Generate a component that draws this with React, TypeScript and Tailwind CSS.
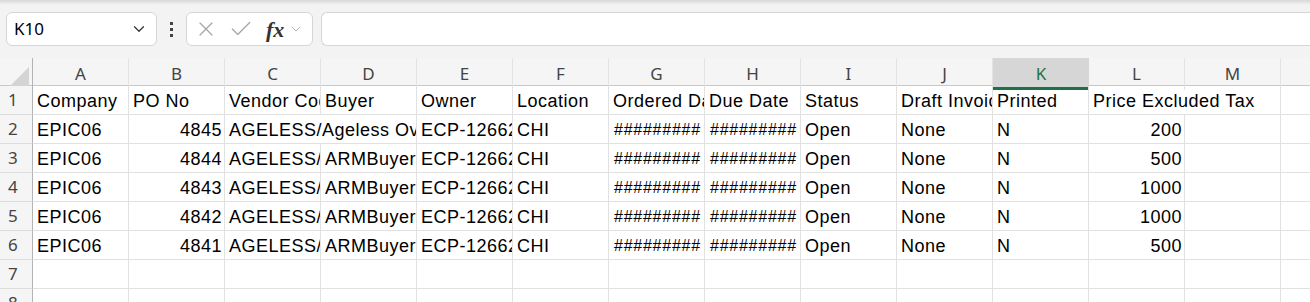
import { ChevronDown, X, Check } from "lucide-react";

const COLS = ["A", "B", "C", "D", "E", "F", "G", "H", "I", "J", "K", "L", "M", "N"];
const ACTIVE_COL = "K";

type Cell = { v?: string; right?: boolean; span?: number; tight?: boolean };

const SPAN: Record<number, string> = {
  1: "",
  2: "col-span-2",
  3: "col-span-3",
};

const hashes = "#########";

const body = (po: string, vendor: string, buyer: string | null, price: string): Cell[] => {
  const cells: Cell[] = [
    { v: "EPIC06" },
    { v: po, right: true },
  ];
  if (buyer === null) {
    cells.push({ v: vendor, span: 2 });
  } else {
    cells.push({ v: vendor }, { v: buyer });
  }
  cells.push(
    { v: "ECP-12662" },
    { v: "CHI" },
    { v: hashes, tight: true },
    { v: hashes, tight: true },
    { v: "Open" },
    { v: "None" },
    { v: "N" },
    { v: price, right: true },
    {},
    {}
  );
  return cells;
};

const ROWS: Cell[][] = [
  [
    { v: "Company" },
    { v: "PO No" },
    { v: "Vendor Code" },
    { v: "Buyer" },
    { v: "Owner" },
    { v: "Location" },
    { v: "Ordered Date" },
    { v: "Due Date" },
    { v: "Status" },
    { v: "Draft Invoice" },
    { v: "Printed" },
    { v: "Price Excluded Tax", span: 2 },
    {},
  ],
  body("4845", "AGELESS/Ageless Overseas", null, "200"),
  body("4844", "AGELESS/ARM", "ARMBuyer", "500"),
  body("4843", "AGELESS/ARM", "ARMBuyer", "1000"),
  body("4842", "AGELESS/ARM", "ARMBuyer", "1000"),
  body("4841", "AGELESS/ARM", "ARMBuyer", "500"),
  [],
  [],
];

function fillRow(cells: Cell[]): Cell[] {
  const used = cells.reduce((n, c) => n + (c.span ?? 1), 0);
  const out = [...cells];
  for (let i = used; i < COLS.length; i++) out.push({});
  return out;
}

export default function App() {
  return (
    <div className="h-[302px] w-[1310px] overflow-hidden bg-white font-['Liberation_Sans',Arial,sans-serif]">
      <Toolbar />
      <div className="flex flex-col">
        <div className="grid h-[28px] grid-cols-[33px_repeat(14,96px)] bg-[#f5f5f5] border-b border-[#c8c8c8]">
          <div className="flex items-end justify-end border-r border-[#b4b4b4] pb-[3px] pr-[3px]">
            <div className="h-0 w-0 border-l-[20px] border-b-[20px] border-l-transparent border-b-[#d4d4d4]" />
          </div>
          {COLS.map((c) => (
            <div
              key={c}
              className={
                c === ACTIVE_COL
                  ? "flex items-center justify-center bg-[#d6d6d6] border-b-[3px] border-[#1e7145] pt-[3px] text-[17px] text-[#1e7145] font-['Noto_Sans',sans-serif]"
                  : "flex items-center justify-center border-r border-[#e3e3e3] text-[17px] text-[#444444] font-['Noto_Sans',sans-serif]"
              }
            >
              {c}
            </div>
          ))}
        </div>
        {ROWS.map((row, r) => (
          <div key={r} className="grid h-[29px] grid-cols-[33px_repeat(14,96px)]">
            <div className="flex items-center pl-[8px] bg-[#f5f5f5] border-r border-b border-r-[#b4b4b4] border-b-[#dcdcdc] text-[17px] text-[#444444] font-['Noto_Sans',sans-serif]">
              {r + 1}
            </div>
            {fillRow(row).map((cell, i) => (
              <div
                key={i}
                className={`${SPAN[cell.span ?? 1]} flex items-center overflow-hidden whitespace-nowrap border-r border-b border-[#e1e1e1] pt-[2px] text-black ${
                  cell.tight ? "text-[16px] tracking-[0.75px] pl-[5px]" : "text-[18px] tracking-[0.5px]"
                } ${cell.right ? "justify-end pr-[2px]" : cell.tight ? "" : "pl-[4px]"}`}
              >
                {cell.v}
              </div>
            ))}
          </div>
        ))}
      </div>
    </div>
  );
}

function Toolbar() {
  return (
    <div className="h-[58px] bg-[#f3f3f3] font-['Noto_Sans',sans-serif]">
      <div className="h-[5px] bg-gradient-to-b from-[#d8d8d8] to-[#f3f3f3]" />
      <div className="flex items-center pl-[6px] pt-[7px]">
        <div className="flex h-[34px] w-[151px] items-center justify-between rounded-[6px] border border-[#d6d6d6] bg-white pl-[7px] pr-[8px]">
          <span className="text-[17px] text-black">K10</span>
          <ChevronDown size={18} strokeWidth={1.6} className="text-[#333]" />
        </div>
        <div className="mx-[13px] flex flex-col gap-[3px]">
          <span className="h-[3px] w-[3px] bg-[#444]" />
          <span className="h-[3px] w-[3px] bg-[#444]" />
          <span className="h-[3px] w-[3px] bg-[#444]" />
        </div>
        <div className="flex h-[34px] w-[127px] items-center rounded-[6px] border border-[#d6d6d6] bg-white pl-[7px]">
          <X size={24} strokeWidth={1.2} className="text-[#a6a6a6]" />
          <Check size={26} strokeWidth={1.2} className="ml-[10px] text-[#a6a6a6]" />
          <span className="ml-[12px] font-['Liberation_Serif',serif] text-[22px] font-bold italic text-[#333]">fx</span>
          <ChevronDown size={16} strokeWidth={1.3} className="ml-[4px] text-[#a6a6a6]" />
        </div>
        <div className="ml-[8px] h-[34px] flex-1 rounded-l-[6px] border border-r-0 border-[#d6d6d6] bg-white" />
      </div>
    </div>
  );
}
